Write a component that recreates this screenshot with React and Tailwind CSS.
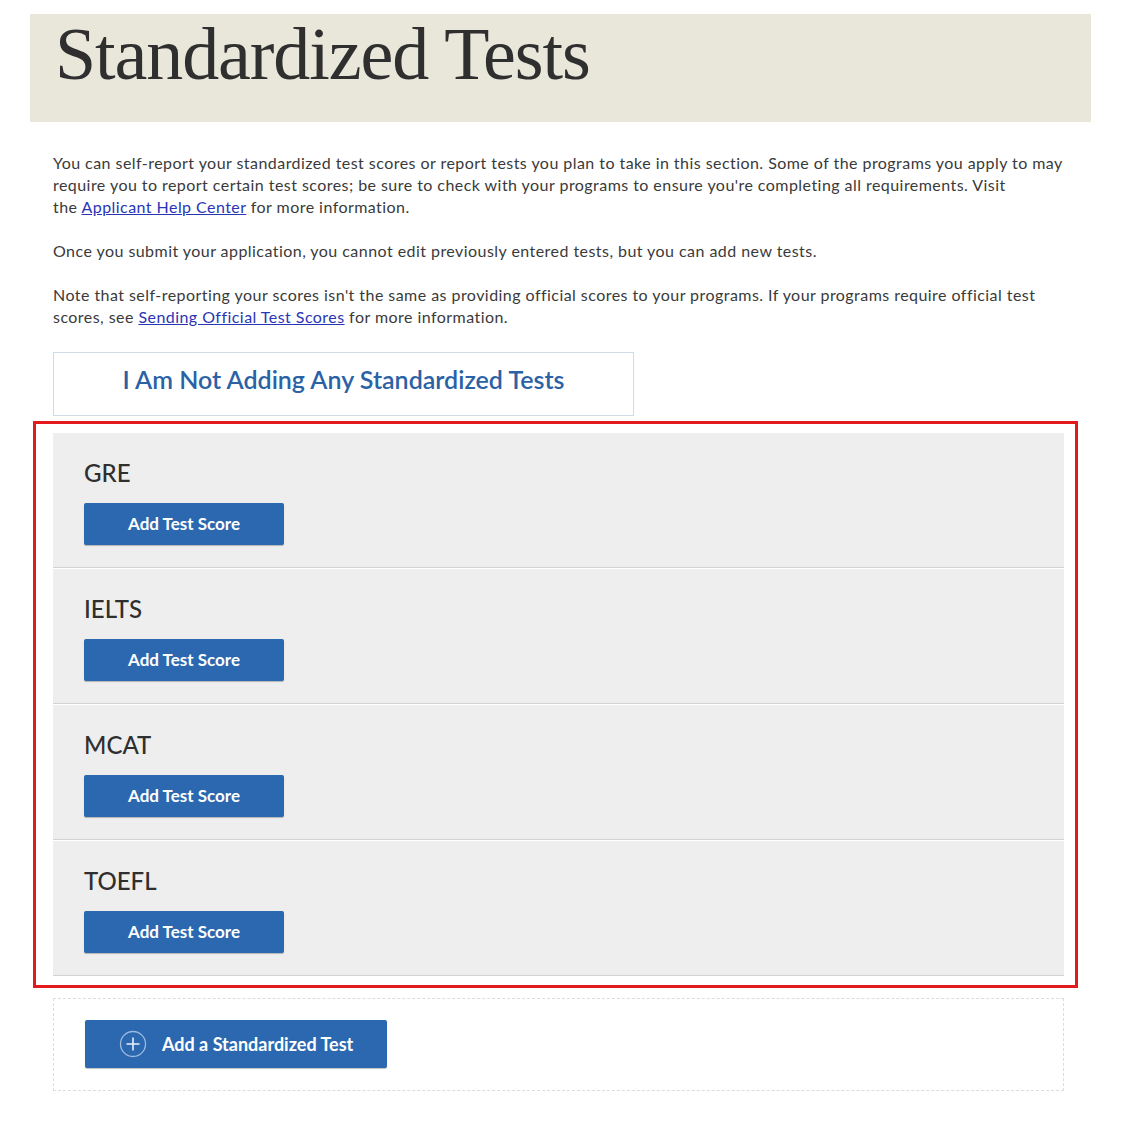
const TESTS = ['GRE', 'IELTS', 'MCAT', 'TOEFL']

function PlusCircle() {
  return (
    <svg width="28" height="28" viewBox="0 0 28 28" fill="none">
      <circle cx="14" cy="14" r="12.5" stroke="#9dbbe0" strokeWidth="1.3" />
      <path d="M14 7.5v13M7.5 14h13" stroke="#e8f0fa" strokeWidth="1.6" />
    </svg>
  )
}

export default function App() {
  return (
    <div className="bg-white min-h-[1121px] pt-[14px] px-[30px] font-['Lato',_'Open_Sans',_sans-serif] text-[#3a3a3a]">
      {/* Header */}
      <div className="h-[108px] bg-[#e9e7da] pl-[25px] pt-[3px]">
        <h1 className="font-['Liberation_Serif',_serif] text-[74px] leading-[74px] tracking-[-1.1px] text-[#2f2f2f]">
          Standardized Tests
        </h1>
      </div>

      <div className="pl-[23px] pr-[27px] pt-[30px]">
        <div className="text-[16px] leading-[22px] tracking-[0.45px] flex flex-col gap-[22px]">
          <p>
            You can self-report your standardized test scores or report tests you plan to take in this section. Some of the programs you apply to may<br />
            require you to report certain test scores; be sure to check with your programs to ensure you're completing all requirements. Visit<br />
            the <a href="#" className="text-[#2a35b5] underline">Applicant Help Center</a> for more information.
          </p>
          <p>Once you submit your application, you cannot edit previously entered tests, but you can add new tests.</p>
          <p>
            Note that self-reporting your scores isn't the same as providing official scores to your programs. If your programs require official test<br />
            scores, see <a href="#" className="text-[#2a35b5] underline">Sending Official Test Scores</a> for more information.
          </p>
        </div>

        <button className="mt-[24px] w-[581px] h-[64px] border border-[#cfdbe7] bg-white text-[#2b62a6] text-[25px] font-semibold flex items-center justify-center pb-[8px]">
          I Am Not Adding Any Standardized Tests
        </button>

        {/* Test list */}
        <div className="mt-[5px] ml-[-20px] mr-[-14px] border-[3px] border-[#e3191c] pl-[17px] pr-[11px] pt-[9px] pb-[9px] flex flex-col gap-[1px]">
          {TESTS.map(t => (
            <div key={t} className="h-[135px] bg-[#eeeeee] border-b border-[#d3d3d3] pl-[31px] pt-[26px]">
              <h2 className="text-[24px] leading-[28px] font-medium text-[#2f2f2f]">{t}</h2>
              <button className="mt-[16px] w-[200px] h-[42px] rounded-[2px] bg-[#2b68b0] text-white text-[17px] font-bold shadow-[0_1px_1px_rgba(0,0,0,0.25)]">
                Add Test Score
              </button>
            </div>
          ))}
        </div>

        {/* Add new */}
        <div className="mt-[10px] h-[93px] border border-dashed border-[#dcdcdc] pl-[31px] pt-[21px]">
          <button className="w-[302px] h-[48px] rounded-[2px] bg-[#2b68b0] text-white text-[18px] font-bold flex items-center pl-[34px] gap-[15px] shadow-[0_1px_1px_rgba(0,0,0,0.25)]">
            <PlusCircle />
            Add a Standardized Test
          </button>
        </div>
      </div>
    </div>
  )
}
